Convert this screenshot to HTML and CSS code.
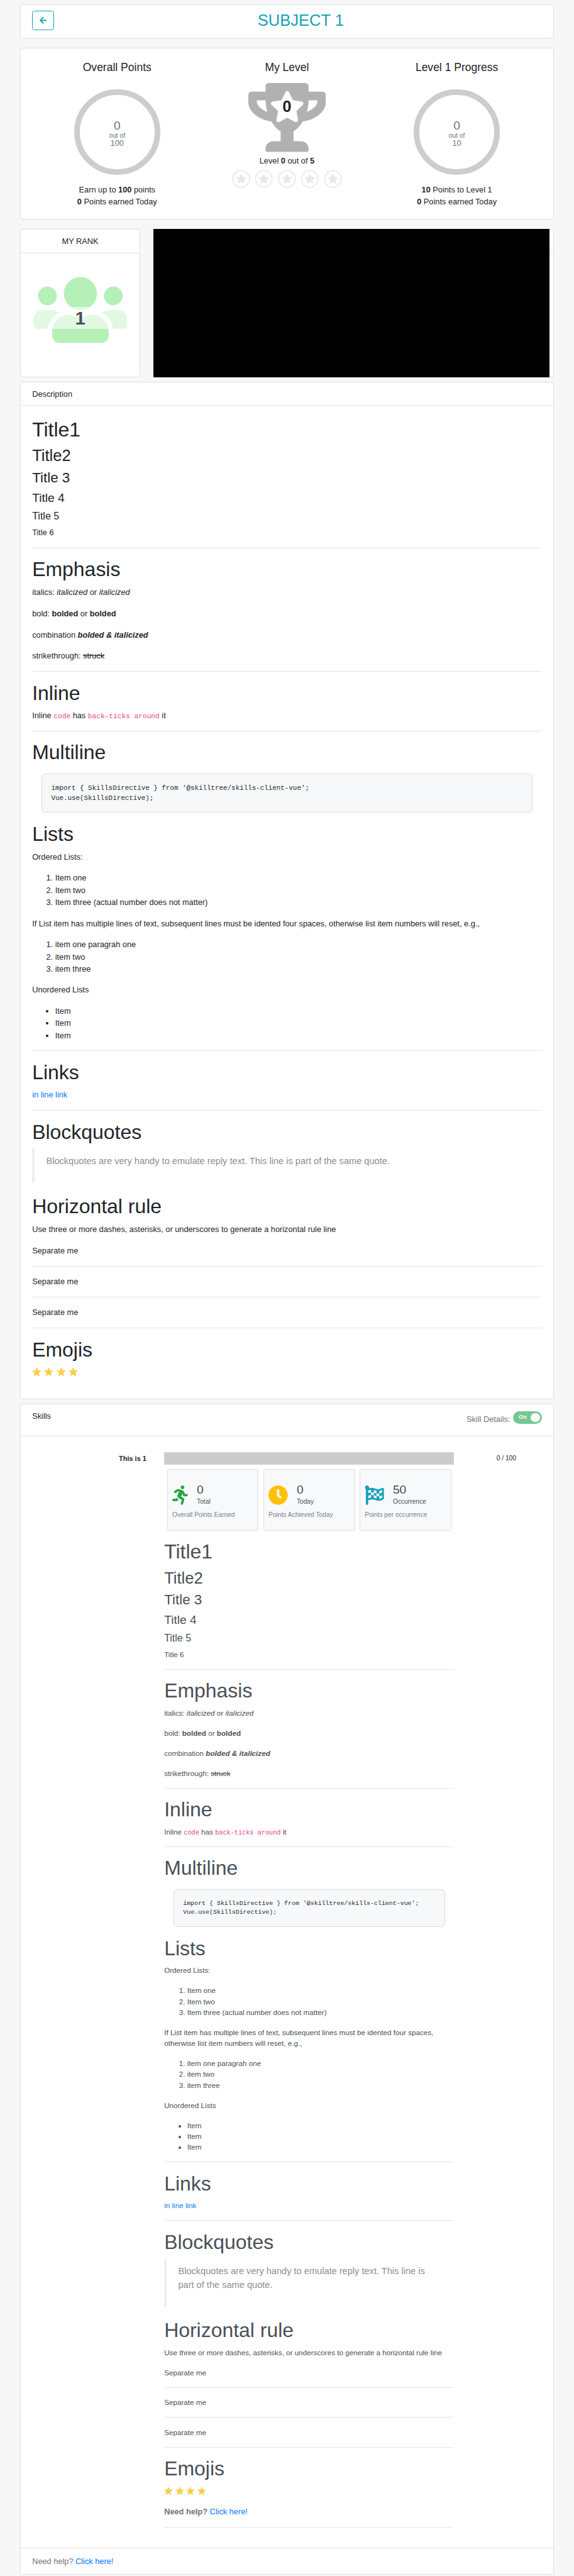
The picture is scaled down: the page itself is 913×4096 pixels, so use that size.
FILE: index.html
```html
<!DOCTYPE html>
<html lang="en">
<head>
<meta charset="utf-8">
<title>Subject 1</title>
<link rel="stylesheet" href="styles.css">
</head>
<body>
<svg class="defs" aria-hidden="true">
  <defs>
    <linearGradient id="gold" x1="0" y1="0" x2="1" y2="1"><stop offset="0" stop-color="#fee44c"/><stop offset="1" stop-color="#fbc02a"/></linearGradient>
    <symbol id="star" viewBox="0 0 576 512"><path d="M259.3 17.8L194 150.2 47.9 171.5c-26.2 3.8-36.7 36.1-17.7 54.6l105.7 103-25 145.5c-4.5 26.3 23.2 46 46.4 33.7L288 439.6l130.7 68.7c23.2 12.2 50.9-7.4 46.4-33.7l-25-145.5 105.7-103c19-18.5 8.5-50.8-17.7-54.6L382 150.2 316.7 17.8c-11.7-23.6-45.6-23.9-57.4 0z"/></symbol>
    <symbol id="emoji" viewBox="0 0 32 32"><path d="M16 1.5l4 10.3 11 .6-8.600 6.900 2.900 10.700L16 24l-9.300 6 2.900-10.700L1 12.400l11-.6z" fill="url(#gold)" stroke="#f0b02c" stroke-width="1" stroke-linejoin="round"/></symbol>
    <symbol id="badge" viewBox="0 0 32 32"><circle cx="16" cy="16" r="14.500" fill="none" stroke="#e9e9e9" stroke-width="2"/><use href="#star" x="7" y="7.500" width="18" height="16"/></symbol>
  </defs>
</svg>
<main class="page">
  <header class="card topbar">
    <button class="back" aria-label="Back"><svg viewBox="0 0 448 512"><path d="M257.500 445.100l-22.200 22.200c-9.400 9.400-24.600 9.400-33.900 0L7 273c-9.400-9.400-9.400-24.600 0-33.900L201.400 44.700c9.400-9.400 24.600-9.400 33.900 0l22.200 22.200c9.500 9.500 9.300 25-.4 34.300L136.600 216H424c13.300 0 24 10.700 24 24v32c0 13.300-10.700 24-24 24H136.600l120.500 114.800c9.800 9.300 10 24.800.4 34.300z"/></svg></button>
    <h2 class="topbar-title">SUBJECT 1</h2>
  </header>

  <section class="card stats">
    <div class="stat">
      <h5 class="stat-title">Overall Points</h5>
      <div class="ring"><span class="ring-value">0</span><span class="ring-of">out of</span><span class="ring-total">100</span></div>
      <div>Earn up to <b>100</b> points</div>
      <div><b>0</b> Points earned Today</div>
    </div>
    <div class="stat">
      <h5 class="stat-title">My Level</h5>
      <div class="trophy">
        <svg class="trophy-cup" viewBox="0 0 576 512"><path d="M552 64H448V24c0-13.300-10.700-24-24-24H152c-13.300 0-24 10.700-24 24v40H24C10.700 64 0 74.700 0 88v56c0 35.700 22.500 72.400 61.900 100.700 31.500 22.700 69.800 37.100 110 41.700C203.300 338.500 240 360 240 360v72h-48c-35.300 0-64 20.700-64 56v12c0 6.600 5.400 12 12 12h296c6.600 0 12-5.400 12-12v-12c0-35.300-28.700-56-64-56h-48v-72s36.700-21.500 68.100-73.600c40.300-4.600 78.600-19 110-41.700 39.300-28.300 61.900-65 61.900-100.700V88c0-13.300-10.700-24-24-24zM99.300 192.800C74.900 175.200 64 155.600 64 144v-16h64.200c1 32.600 5.800 61.200 12.800 86.200-15.100-5.200-29.200-12.400-41.700-21.400zM512 144c0 16.100-17.700 36.100-35.300 48.800-12.500 9-26.700 16.200-41.800 21.400 7-25 11.800-53.600 12.800-86.200H512v16z"/></svg>
        <svg class="trophy-star"><use href="#star"/></svg>
        <span class="trophy-level">0</span>
      </div>
      <div>Level <b>0</b> out of <b>5</b></div>
      <div class="badges">
        <svg><use href="#badge"/></svg><svg><use href="#badge"/></svg><svg><use href="#badge"/></svg><svg><use href="#badge"/></svg><svg><use href="#badge"/></svg>
      </div>
    </div>
    <div class="stat">
      <h5 class="stat-title">Level 1 Progress</h5>
      <div class="ring"><span class="ring-value">0</span><span class="ring-of">out of</span><span class="ring-total">10</span></div>
      <div><b>10</b> Points to Level 1</div>
      <div><b>0</b> Points earned Today</div>
    </div>
  </section>

  <div class="rank-row">
    <section class="card rank">
      <div class="card-head">MY RANK</div>
      <div class="rank-body">
        <svg class="rank-icon" viewBox="0 0 640 512"><path d="M96 224c35.300 0 64-28.700 64-64s-28.700-64-64-64-64 28.700-64 64 28.700 64 64 64zm448 0c35.300 0 64-28.700 64-64s-28.700-64-64-64-64 28.700-64 64 28.700 64 64 64zm32 32h-64c-17.600 0-33.500 7.100-45.100 18.600 40.300 22.100 68.900 62 75.100 109.400h66c17.700 0 32-14.300 32-32v-32c0-35.300-28.700-64-64-64zm-256 0c61.900 0 112-50.100 112-112S381.900 32 320 32 208 82.100 208 144s50.100 112 112 112zm76.800 32h-8.300c-20.800 10-43.900 16-68.500 16s-47.600-6-68.500-16h-8.300C179.600 288 128 339.600 128 403.200V432c0 26.500 21.500 48 48 48h288c26.500 0 48-21.500 48-48v-28.800c0-63.600-51.600-115.200-115.200-115.200zm-223.700-13.400C161.500 263.100 145.600 256 128 256H64c-35.300 0-64 28.700-64 64v32c0 17.700 14.300 32 32 32h65.900c6.300-47.400 34.900-87.300 75.200-109.400z"/></svg>
        <span class="rank-value">1</span>
      </div>
    </section>
    <section class="card history"><div class="card-head">&nbsp;</div><div class="history-mask"></div></section>
  </div>

  <section class="card description">
    <div class="card-head">Description</div>
    <div class="card-body md">
      <h1>Title1</h1><h2>Title2</h2><h3>Title 3</h3><h4>Title 4</h4><h5>Title 5</h5><h6>Title 6</h6>
      <hr>
      <h1>Emphasis</h1>
      <p>italics: <em>italicized</em> or <em>italicized</em></p>
      <p>bold: <strong>bolded</strong> or <strong>bolded</strong></p>
      <p>combination <strong><em>bolded &amp; italicized</em></strong></p>
      <p>strikethrough: <del>struck</del></p>
      <hr>
      <h1>Inline</h1>
      <p>Inline <code>code</code> has <code>back-ticks around</code> it</p>
      <hr>
      <h1>Multiline</h1>
      <pre>import { SkillsDirective } from '@skilltree/skills-client-vue';
Vue.use(SkillsDirective);</pre>
      <h1>Lists</h1>
      <p>Ordered Lists:</p>
      <ol><li>Item one</li><li>Item two</li><li>Item three (actual number does not matter)</li></ol>
      <p>If List item has multiple lines of text, subsequent lines must be idented four spaces, otherwise list item numbers will reset, e.g.,</p>
      <ol><li>item one paragrah one</li><li>item two</li><li>item three</li></ol>
      <p>Unordered Lists</p>
      <ul><li>Item</li><li>Item</li><li>Item</li></ul>
      <hr>
      <h1>Links</h1>
      <p><a href="#">in line link</a></p>
      <hr>
      <h1>Blockquotes</h1>
      <blockquote><p>Blockquotes are very handy to emulate reply text. This line is part of the same quote.</p></blockquote>
      <h1>Horizontal rule</h1>
      <p>Use three or more dashes, asterisks, or underscores to generate a horizontal rule line</p>
      <p>Separate me</p><hr>
      <p>Separate me</p><hr>
      <p>Separate me</p><hr>
      <h1>Emojis</h1>
      <p class="emojis"><svg><use href="#emoji"/></svg><svg><use href="#emoji"/></svg><svg><use href="#emoji"/></svg><svg><use href="#emoji"/></svg></p>
    </div>
  </section>

  <section class="card">
    <div class="card-head skills-head">
      <span>Skills</span>
      <div class="details"><span>Skill Details:</span><span class="toggle">On<i class="knob"></i></span></div>
    </div>
    <div class="card-body skills-body">
      <div class="skill-name">This is 1</div>
      <div class="skill-main">
        <div class="bar"></div>
        <div class="tiles">
          <div class="tile">
            <div class="tile-top">
              <svg class="run" viewBox="0 0 416 512"><path d="M272 96c26.510 0 48-21.490 48-48S298.510 0 272 0s-48 21.490-48 48 21.490 48 48 48zM113.690 317.470l-14.800 34.520H32c-17.670 0-32 14.330-32 32s14.330 32 32 32h77.450c19.250 0 36.580-11.440 44.110-29.090l8.790-20.520-10.670-6.300c-17.320-10.230-30.060-25.370-37.990-42.610zM384 223.990h-44.030l-26.060-53.250c-12.500-25.550-35.450-44.230-61.780-50.940l-71.080-21.140c-28.300-6.800-57.770-.55-80.840 17.140l-39.670 30.410c-14.030 10.750-16.690 30.830-5.920 44.860s30.840 16.660 44.860 5.920l39.690-30.410c7.670-5.890 17.440-8 25.270-6.140l14.700 4.370-37.460 87.390c-12.620 29.480-1.310 64.010 26.300 80.310l84.980 50.170-27.470 87.730c-5.280 16.860 4.110 34.810 20.970 40.090 3.190 1 6.410 1.480 9.580 1.480 13.610 0 26.230-8.770 30.520-22.450l31.640-101.060c5.910-20.770-2.890-43.080-21.640-54.390l-61.240-36.140 31.310-78.280 20.270 41.430c8 16.340 24.920 26.890 43.110 26.890H384c17.670 0 32-14.330 32-32s-14.330-31.990-32-31.990z"/></svg>
              <div><div class="num">0</div><div class="lab">Total</div></div>
            </div>
            <div class="cap">Overall Points Earned</div>
          </div>
          <div class="tile">
            <div class="tile-top">
              <svg class="clock" viewBox="0 0 512 512"><path d="M256 0C114.600 0 0 114.600 0 256s114.600 256 256 256 256-114.600 256-256S397.400 0 256 0zm92.490 313l-20 25a16 16 0 0 1-22.490 2.500l-67-49.720a40 40 0 0 1-15-31.230V112a16 16 0 0 1 16-16h32a16 16 0 0 1 16 16v144l58 42.500a16 16 0 0 1 2.490 22.500z"/></svg>
              <div><div class="num">0</div><div class="lab">Today</div></div>
            </div>
            <div class="cap">Points Achieved Today</div>
          </div>
          <div class="tile">
            <div class="tile-top">
              <svg class="flag" viewBox="0 0 512 512"><path d="M243.200 189.900V258c26.100 5.900 49.300 15.600 73.600 22.300v-68.200c-26-5.800-49.400-15.500-73.600-22.200zm223.300-123c-34.300 15.900-76.500 31.900-117 31.900C296 98.800 251.700 64 184.300 64c-25 0-47.300 4.400-68 12 2.800-7.300 4.100-15.200 3.600-23.600C118.100 24 94.800 1.200 66.300 0 34.300-1.300 8 24.300 8 56c0 19 9.500 35.800 24 45.900V488c0 13.300 10.700 24 24 24h16c13.300 0 24-10.700 24-24v-94.400c28.300-12.100 63.600-22.100 114.400-22.100 53.600 0 97.800 34.800 165.200 34.800 48.200 0 86.700-16.300 122.500-40.900 8.700-6 13.800-15.800 13.800-26.400V95.900c.1-23.300-24.200-38.800-45.400-29zM169.600 325.500c-25.800 2.700-50 8.200-73.600 16.600v-70.500c26.200-9.300 47.500-15 73.600-17.400zM464 191c-23.600 9.800-46.300 19.500-73.600 23.900V286c24.800-3.400 51.400-11.800 73.600-26v70.500c-25.100 16.100-48.500 24.700-73.600 27.100V286c-27 3.700-47.900 1.500-73.600-5.600v67.400c-23.900-7.400-47.300-16.700-73.600-21.300V258c-19.700-4.400-40.800-6.800-73.600-3.800v-70c-22.400 3.100-44.600 10.200-73.600 20.900v-70.500c33.200-12.200 50.100-19.800 73.600-22v71.600c27-3.700 48.400-1.300 73.600 5.700v-67.400c23.700 7.400 47.200 16.700 73.600 21.300v68.400c23.700 5.300 47.600 6.900 73.600 2.700V143c27-4.800 52.300-13.600 73.600-22.500z"/></svg>
              <div><div class="num">50</div><div class="lab">Occurrence</div></div>
            </div>
            <div class="cap">Points per occurrence</div>
          </div>
        </div>
        <div class="md md-small">
          <h1>Title1</h1><h2>Title2</h2><h3>Title 3</h3><h4>Title 4</h4><h5>Title 5</h5><h6>Title 6</h6>
          <hr>
          <h1>Emphasis</h1>
          <p>italics: <em>italicized</em> or <em>italicized</em></p>
          <p>bold: <strong>bolded</strong> or <strong>bolded</strong></p>
          <p>combination <strong><em>bolded &amp; italicized</em></strong></p>
          <p>strikethrough: <del>struck</del></p>
          <hr>
          <h1>Inline</h1>
          <p>Inline <code>code</code> has <code>back-ticks around</code> it</p>
          <hr>
          <h1>Multiline</h1>
          <pre>import { SkillsDirective } from '@skilltree/skills-client-vue';
Vue.use(SkillsDirective);</pre>
          <h1>Lists</h1>
          <p>Ordered Lists:</p>
          <ol><li>Item one</li><li>Item two</li><li>Item three (actual number does not matter)</li></ol>
          <p>If List item has multiple lines of text, subsequent lines must be idented four spaces, otherwise list item numbers will reset, e.g.,</p>
          <ol><li>item one paragrah one</li><li>item two</li><li>item three</li></ol>
          <p>Unordered Lists</p>
          <ul><li>Item</li><li>Item</li><li>Item</li></ul>
          <hr>
          <h1>Links</h1>
          <p><a href="#">in line link</a></p>
          <hr>
          <h1>Blockquotes</h1>
          <blockquote><p>Blockquotes are very handy to emulate reply text. This line is part of the same quote.</p></blockquote>
          <h1>Horizontal rule</h1>
          <p>Use three or more dashes, asterisks, or underscores to generate a horizontal rule line</p>
          <p>Separate me</p><hr>
          <p>Separate me</p><hr>
          <p>Separate me</p><hr>
          <h1>Emojis</h1>
          <p class="emojis"><svg><use href="#emoji"/></svg><svg><use href="#emoji"/></svg><svg><use href="#emoji"/></svg><svg><use href="#emoji"/></svg></p>
          <p class="help"><b>Need help?</b> <a href="#">Click here!</a></p>
          <hr>
        </div>
      </div>
      <div class="skill-score">0 / 100</div>
    </div>
    <footer class="card-foot">Need help? <a href="#">Click here!</a></footer>
  </section>
</main>
</body>
</html>
```
FILE: styles.css
```css
* { box-sizing: border-box; }
html { background: #f7f7f7; }
body {
  margin: 0;
  font: 14px/1.5 "Liberation Sans", Arial, sans-serif;
  color: #212529;
  background: #f7f7f7;
}
.defs { display: block; width: 0; height: 0; }
a { color: #007bff; text-decoration: none; }
h1, h2, h3, h4, h5, h6 { margin: 0 0 8px; font-weight: 400; line-height: 1.2; }
h1 { font-size: 35px; }
h2 { font-size: 28px; line-height: 33px; }
h3 { font-size: 24.5px; line-height: 29px; }
h4 { font-size: 21px; line-height: 25px; }
h5 { font-size: 17.5px; }
h6 { font-size: 1em; line-height: inherit; }

.page { width: 1000px; padding: 8px 35px 0; zoom: 0.9129; }
.card { background: #fff; border: 1px solid #dfdfdf; border-radius: 4px; }
.card-head { height: 41px; padding: 9.6px 20px 0; border-bottom: 1px solid #dfdfdf; }
.card-body { padding: 20px 20px 19.8px; }
.description { margin-bottom: 8px; }

.topbar { display: flex; align-items: flex-start; height: 59px; padding: 9px 10px 0 20px; margin-bottom: 16px; }
.back {
  display: flex; align-items: center; justify-content: center;
  width: 38px; height: 35px; padding: 0;
  background: #fff; border: 1px solid #17a2b8; border-radius: 4px;
}
.back svg { width: 12.3px; height: 14px; fill: #17a2b8; }
.topbar-title { flex: 1; margin: 0; text-align: center; color: #17a2b8; }

.stats { display: grid; grid-template-columns: repeat(3, 1fr); height: 299.500px; padding: 22.500px 20px 0; margin-bottom: 16.500px; text-align: center; }
.stat-title { margin: 0; height: 38.500px; font-size: 19.2px; }
.ring {
  display: flex; flex-direction: column; align-items: center;
  width: 150px; height: 150px; margin: 10px auto 15px; padding-top: 42px;
  border: 10px solid #cdcdcd; border-radius: 50%; color: #6c757d;
}
.ring-value { font-size: 21px; line-height: 24px; }
.ring-of { font-size: 11.2px; line-height: 12px; }
.ring-total { line-height: 14px; }
.trophy { position: relative; width: 135px; height: 120px; margin: 0 auto 4.500px; }
.trophy-cup { display: block; width: 135px; height: 120px; fill: #b1b1b1; }
.trophy-star { position: absolute; left: 37px; top: 13px; width: 61px; height: 56px; fill: #fff; }
.trophy-level { position: absolute; inset: 24px 0 auto; font-size: 28px; line-height: 34px; font-weight: 700; }
.badges { display: flex; justify-content: center; gap: 8px; margin-top: 5px; fill: #e9e9e9; }
.badges svg { width: 32px; height: 32px; }

.rank-row { display: grid; grid-template-columns: 209.500px 1fr; gap: 23px; height: 258px; margin-bottom: 8px; }
.rank { text-align: center; }
.rank-body { position: relative; width: 164px; margin: 33.500px auto 0; }
.rank-icon { display: block; width: 164px; height: 131.200px; fill: #b5f0b8; }
.rank-value {
  position: absolute; left: 0; right: 0; top: 59.500px;
  height: 39px; background: rgba(255, 255, 255, .6);
  color: #495057; font-size: 32px; line-height: 40px; font-weight: 700;
}
.history { position: relative; }
.history-mask { position: absolute; left: -1px; right: 6px; top: -1px; bottom: -1px; background: #000; }

.md hr { height: 0; margin: 16px 0 15.900px; border: 0; border-top: 1px solid #e5e5e5; }
.md p, .md ol, .md ul { margin: 0 0 16px; }
.md ol, .md ul { padding-left: 40px; }
.md code { font: 87.500%/1 "Liberation Mono", monospace; color: #e83e8c; }
.md pre {
  margin: 16px; padding: 16px 16px 15.8px; color: #24292e;
  font: .85em/17px "Liberation Mono", monospace;
  background: #f6f8fa; border: 1px solid #dcdcdc; border-radius: 6px;
}
.md blockquote { margin: 0 0 20px; padding: 10px 20px; border-left: 5px solid #eee; font-size: 16px; line-height: 24px; color: #8e8e8e; }
.md .emojis { display: flex; align-items: center; height: 1.500em; gap: .35em; }
.emojis svg { width: 1.150em; height: 1.150em; }

.skills-head { display: flex; justify-content: space-between; height: 55px; }
.details { display: flex; color: #6c757d; gap: 5px; line-height: 33px; margin-top: -.5px; }
.toggle {
  position: relative; width: 50px; height: 22px; margin-top: 2.500px; padding-left: 10px;
  border-radius: 11px; background: #75c791; color: #fff; font-size: 10px; font-weight: 600; line-height: 21px;
}
.knob { position: absolute; right: 3px; top: 3px; width: 16px; height: 16px; border-radius: 50%; background: #fff; }

.skills-body { display: grid; grid-template-columns: 219px 505px 1fr; column-gap: 31px; padding: 27.500px 20px 19.800px 0; }
.skill-name { text-align: right; font-size: 12px; font-weight: 700; line-height: 22px; }
.skill-score { padding-left: 43px; font-size: 11.200px; line-height: 22px; }
.bar { height: 22px; background: #ccc; border: 2px solid #d3d3d3; }
.tiles { display: grid; grid-template-columns: repeat(3, 1fr); gap: 8px; margin: 8px 5px 16px; }
.tile { height: 107px; padding: 23px 8px 0; background: #f8f9fb; border: 1px solid #dfdfdf; border-radius: 3px; color: #495057; }
.tile-top { display: flex; gap: 15.500px; height: 43px; }
.tile-top svg { height: 33.600px; margin-top: 4.500px; }
.run { width: 27.300px; fill: #28a745; }
.clock { width: 33.600px; fill: #ffc107; }
.flag { width: 33.600px; fill: #17a2b8; }
.num { font-size: 21px; line-height: 24px; }
.lab { font-size: 11.200px; line-height: 17px; }
.cap { margin-top: 4px; font-size: 11.200px; line-height: 17px; color: #7b838a; white-space: nowrap; }

.md-small { font-size: 12.800px; line-height: 19px; color: #495057; }
.md-small pre { padding-bottom: 16px; line-height: 15.8px; }
.md-small .emojis { height: 19px; }
.md-small .help { font-size: 14px; line-height: 21px; color: #6c757d; }
.card-foot { height: 46px; padding: 12px 20px 0; border-top: 1px solid #dfdfdf; color: #6c757d; }
```
